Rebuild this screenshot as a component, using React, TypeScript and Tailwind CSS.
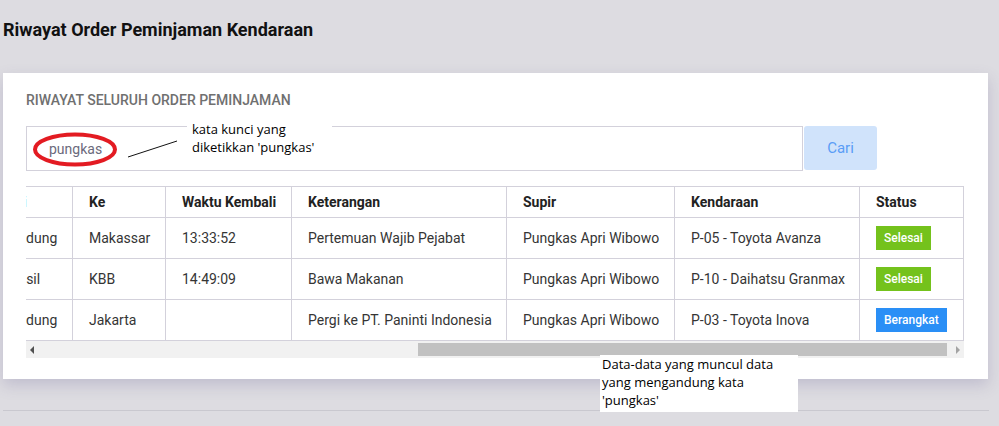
import { useState } from "react";

type Row = {
  no: number;
  kode: string;
  tanggal: string;
  pemesan: string;
  berangkat: string;
  dari: string;
  ke: string;
  kembali: string;
  keterangan: string;
  supir: string;
  kendaraan: string;
  status: "Selesai" | "Berangkat";
};

const rows: Row[] = [
  { no: 1, kode: "ORD-0012", tanggal: "2019-07-02", pemesan: "Andi Saputra", berangkat: "08:10:22", dari: "Bandung", ke: "Makassar", kembali: "13:33:52", keterangan: "Pertemuan Wajib Pejabat", supir: "Pungkas Apri Wibowo", kendaraan: "P-05 - Toyota Avanza", status: "Selesai" },
  { no: 2, kode: "ORD-0015", tanggal: "2019-07-04", pemesan: "Rina Kusuma", berangkat: "09:02:41", dari: "Kansil", ke: "KBB", kembali: "14:49:09", keterangan: "Bawa Makanan", supir: "Pungkas Apri Wibowo", kendaraan: "P-10 - Daihatsu Granmax", status: "Selesai" },
  { no: 3, kode: "ORD-0021", tanggal: "2019-07-09", pemesan: "Budi Hartono", berangkat: "07:45:03", dari: "Bandung", ke: "Jakarta", kembali: "", keterangan: "Pergi ke PT. Paninti Indonesia", supir: "Pungkas Apri Wibowo", kendaraan: "P-03 - Toyota Inova", status: "Berangkat" },
];

const th = "border border-[#d3d1db] px-4 text-left font-bold text-[#222] whitespace-nowrap";
const td = "border border-[#d3d1db] px-4 whitespace-nowrap";

function StatusBadge({ status }: { status: Row["status"] }) {
  return (
    <span className={`inline-flex h-6 items-center px-2 text-[12px] font-medium text-white ${status === "Selesai" ? "bg-[#74c21c]" : "bg-[#2a8ff6]"}`}>
      {status}
    </span>
  );
}

export default function App() {
  const [keyword, setKeyword] = useState("pungkas");

  return (
    <div className="relative h-[426px] w-[999px] overflow-hidden bg-[#dddce1] px-[3px] pt-[18px] font-['Roboto',sans-serif]">
      <h1 className="h-6 text-[18px] leading-6 font-bold text-[#111]">Riwayat Order Peminjaman Kendaraan</h1>

      <div className="mt-[31px] w-[985px] bg-white pt-[18px] pb-[21px] pl-[23px] shadow-[0_6px_14px_rgba(90,80,140,0.22)]">
        <h2 className="h-[18px] text-[14px] leading-[18px] font-medium text-[#707070] uppercase">Riwayat Seluruh Order Peminjaman</h2>

        <div className="mt-[17px] flex w-[851px]">
          <input
            value={keyword}
            onChange={(e) => setKeyword(e.target.value)}
            className="h-[45px] flex-1 border border-[#d3d1db] pl-[22px] text-[14px] text-[#6b6a7c] outline-none"
          />
          <button type="button" className="ml-px h-[44px] w-[73px] rounded-[3px] bg-[#d0e3fb] text-[15px] text-[#5a9df6]">
            Cari
          </button>
        </div>

        <div className="mt-[15px] w-[938px]">
          <div className="flex justify-end overflow-hidden">
            <table className="w-[1620px] shrink-0 table-fixed border-collapse text-[14px] text-[#353535]">
              <colgroup>
                <col className="w-[50px]" />
                <col className="w-[120px]" />
                <col className="w-[110px]" />
                <col className="w-[200px]" />
                <col className="w-[162px]" />
                <col className="w-[87px]" />
                <col className="w-[93px]" />
                <col className="w-[126px]" />
                <col className="w-[215px]" />
                <col className="w-[168px]" />
                <col className="w-[185px]" />
                <col className="w-[104px]" />
              </colgroup>
              <thead>
                <tr className="h-[31px]">
                  <th className={th}>No</th>
                  <th className={th}>Kode Order</th>
                  <th className={th}>Tanggal</th>
                  <th className={th}>Pemesan</th>
                  <th className={th}>Waktu Berangkat</th>
                  <th className={`${th} !font-normal !text-[#1e8ce8]`}>Dari</th>
                  <th className={th}>Ke</th>
                  <th className={th}>Waktu Kembali</th>
                  <th className={th}>Keterangan</th>
                  <th className={th}>Supir</th>
                  <th className={th}>Kendaraan</th>
                  <th className={th}>Status</th>
                </tr>
              </thead>
              <tbody>
                {rows.map((r) => (
                  <tr key={r.no} className="h-[41px]">
                    <td className={td}>{r.no}</td>
                    <td className={td}>{r.kode}</td>
                    <td className={td}>{r.tanggal}</td>
                    <td className={td}>{r.pemesan}</td>
                    <td className={td}>{r.berangkat}</td>
                    <td className={td}>{r.dari}</td>
                    <td className={td}>{r.ke}</td>
                    <td className={td}>{r.kembali}</td>
                    <td className={td}>{r.keterangan}</td>
                    <td className={td}>{r.supir}</td>
                    <td className={td}>{r.kendaraan}</td>
                    <td className={td}>
                      <StatusBadge status={r.status} />
                    </td>
                  </tr>
                ))}
              </tbody>
            </table>
          </div>

          {/* scrollbar, scrolled to the far right */}
          <div className="flex h-[17px] items-center bg-[#f1f1f1]">
            <div className="flex w-3 justify-center">
              <span className="h-0 w-0 border-y-[4px] border-r-[4px] border-y-transparent border-r-[#505050]" />
            </div>
            <div className="flex flex-1 justify-end pr-[5px]">
              <div className="h-[13px] w-[529px] bg-[#c1c1c1]" />
            </div>
            <div className="flex w-3 justify-center">
              <span className="h-0 w-0 border-y-[4px] border-l-[4px] border-y-transparent border-l-[#a3a3a3]" />
            </div>
          </div>
        </div>
      </div>

      <div className="mt-[31px] h-px w-[986px] bg-[#c9c8cf]" />

      {/* annotations */}
      <svg className="pointer-events-none absolute top-0 left-0" width="999" height="426">
        <ellipse cx="75" cy="149.5" rx="40" ry="15" fill="none" stroke="#e31b22" strokeWidth="4" />
        <line x1="128" y1="157" x2="177" y2="141" stroke="#111" strokeWidth="1" />
      </svg>
      <div className="absolute top-[119px] left-[187px] w-[145px] bg-white pt-px pb-[3px] pl-[5px] font-['Open_Sans',sans-serif] text-[13px] leading-[18px] text-black">
        kata kunci yang
        <br />
        diketikkan 'pungkas'
      </div>
      <div className="absolute top-[355px] left-[600px] h-[57px] w-[198px] bg-white pl-[2px] font-['Open_Sans',sans-serif] text-[13px] leading-[18px] text-black">
        Data-data yang muncul data
        <br />
        yang mengandung kata
        <br />
        'pungkas'
      </div>
    </div>
  );
}
